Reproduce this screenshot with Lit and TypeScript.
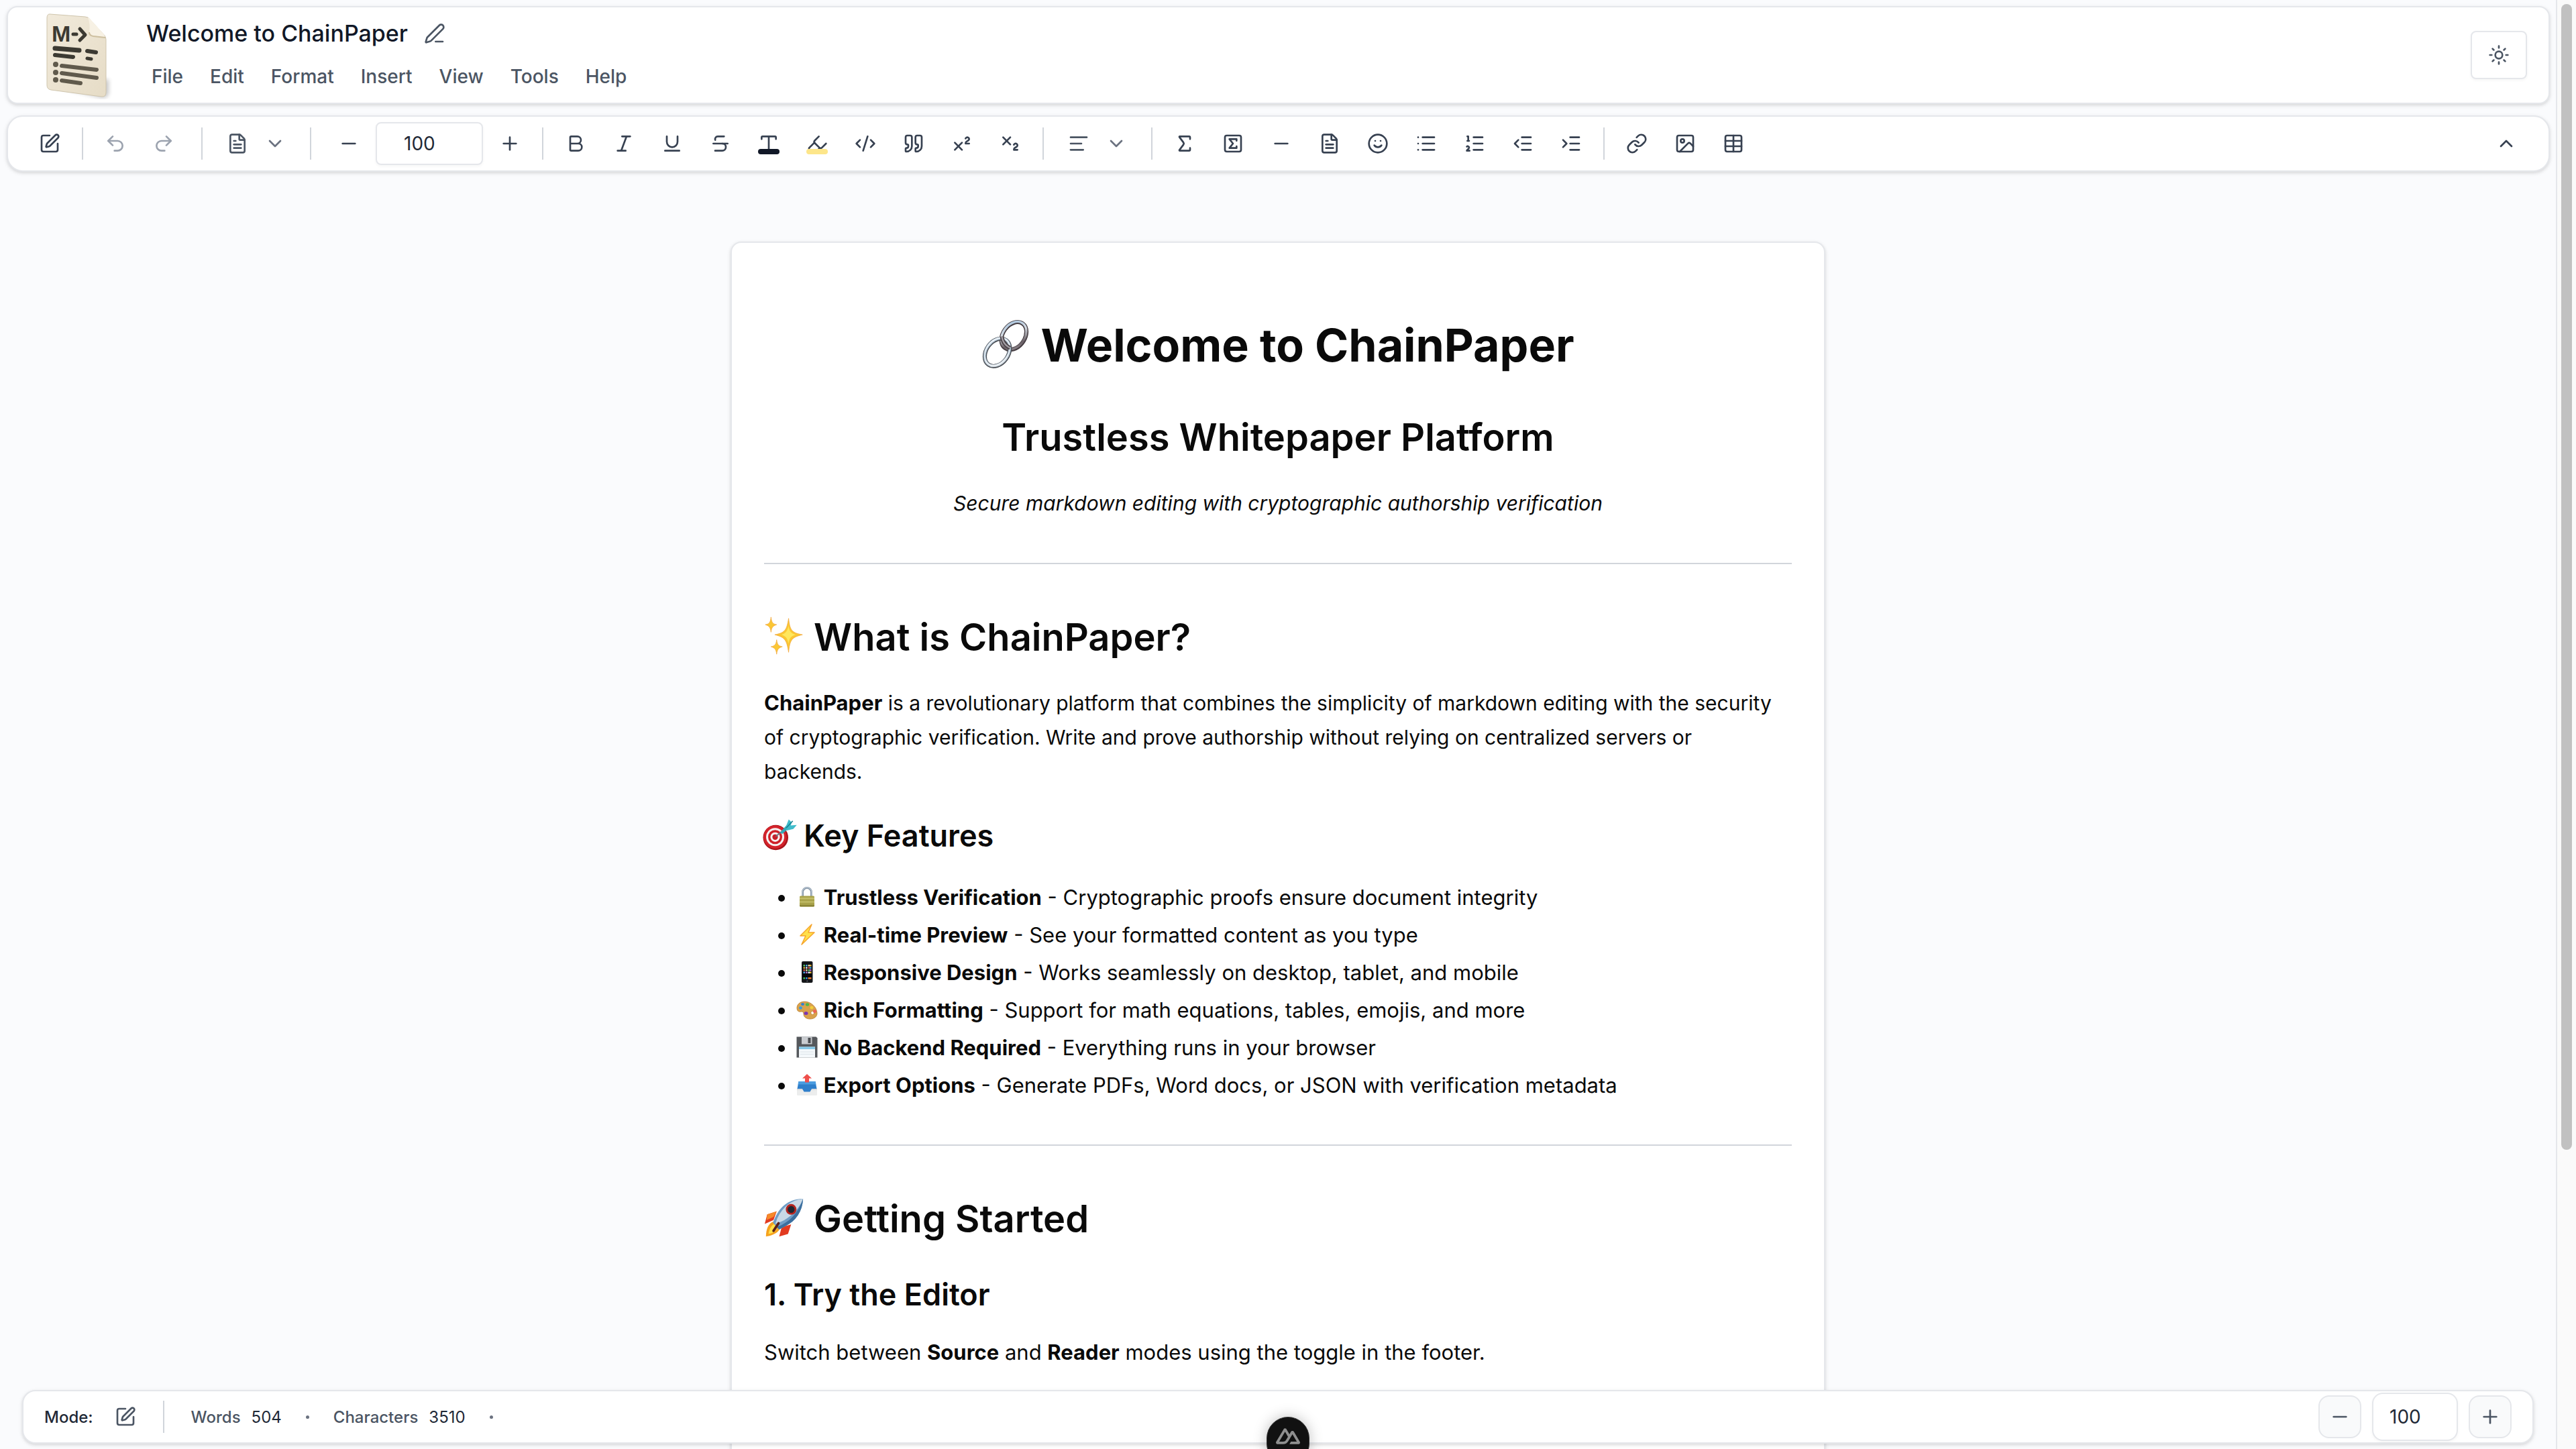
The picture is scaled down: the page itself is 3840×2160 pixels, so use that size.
import { LitElement, html, svg, css } from "lit";
import { customElement, property } from "lit/decorators.js";

const ICONS: Record<string, unknown> = {
  squarePen: svg`<path d="M12 3H5a2 2 0 0 0-2 2v14a2 2 0 0 0 2 2h14a2 2 0 0 0 2-2v-7"/><path d="M18.375 2.625a1 1 0 0 1 3 3l-9.013 9.014a2 2 0 0 1-.853.505l-2.873.84a.5.5 0 0 1-.62-.62l.84-2.873a2 2 0 0 1 .506-.852z"/>`,
  penLine: svg`<path d="M13 21h8"/><path d="M21.174 6.812a1 1 0 0 0-3.986-3.987L3.842 16.174a2 2 0 0 0-.5.83l-1.321 4.352a.5.5 0 0 0 .623.622l4.353-1.32a2 2 0 0 0 .83-.497z"/>`,
  undo: svg`<path d="M9 14 4 9l5-5"/><path d="M4 9h10.5a5.5 5.5 0 0 1 0 11H11"/>`,
  redo: svg`<path d="m15 14 5-5-5-5"/><path d="M20 9H9.500a5.5 5.5 0 0 0 0 11H13"/>`,
  fileText: svg`<path d="M6 22a2 2 0 0 1-2-2V4a2 2 0 0 1 2-2h8a2.400 2.400 0 0 1 1.704.706l3.588 3.588A2.400 2.400 0 0 1 20 8v12a2 2 0 0 1-2 2z"/><path d="M14 2v5a1 1 0 0 0 1 1h5"/><path d="M10 9H8"/><path d="M16 13H8"/><path d="M16 17H8"/>`,
  chevronDown: svg`<path d="m6 9 6 6 6-6"/>`,
  chevronUp: svg`<path d="m18 15-6-6-6 6"/>`,
  minus: svg`<path d="M5 12h14"/>`,
  plus: svg`<path d="M5 12h14"/><path d="M12 5v14"/>`,
  bold: svg`<path d="M6 12h9a4 4 0 0 1 0 8H7a1 1 0 0 1-1-1V5a1 1 0 0 1 1-1h7a4 4 0 0 1 0 8"/>`,
  italic: svg`<path d="M19 4h-9"/><path d="M14 20H5"/><path d="M15 4 9 20"/>`,
  underline: svg`<path d="M6 4v6a6 6 0 0 0 12 0V4"/><path d="M4 20h16"/>`,
  strike: svg`<path d="M16 4H9a3 3 0 0 0-2.830 4"/><path d="M14 12a4 4 0 0 1 0 8H6"/><path d="M4 12h16"/>`,
  type: svg`<path d="M12 4v16"/><path d="M4 7V5a1 1 0 0 1 1-1h14a1 1 0 0 1 1 1v2"/><path d="M9 20h6"/>`,
  highlighter: svg`<path d="m9 11-6 6v3h9l3-3"/><path d="m22 12-4.600 4.600a2 2 0 0 1-2.800 0l-5.200-5.200a2 2 0 0 1 0-2.800L14 4"/>`,
  code: svg`<path d="m18 16 4-4-4-4"/><path d="m6 8-4 4 4 4"/><path d="m14.500 4-5 16"/>`,
  quote: svg`<path d="M16 3a2 2 0 0 0-2 2v6a2 2 0 0 0 2 2 1 1 0 0 1 1 1v1a2 2 0 0 1-2 2 1 1 0 0 0-1 1v2a1 1 0 0 0 1 1 6 6 0 0 0 6-6V5a2 2 0 0 0-2-2z"/><path d="M5 3a2 2 0 0 0-2 2v6a2 2 0 0 0 2 2 1 1 0 0 1 1 1v1a2 2 0 0 1-2 2 1 1 0 0 0-1 1v2a1 1 0 0 0 1 1 6 6 0 0 0 6-6V5a2 2 0 0 0-2-2z"/>`,
  superscript: svg`<path d="m4 19 8-8"/><path d="m12 19-8-8"/><path d="M20 12h-4c0-1.500.442-2 1.500-2.500S20 8.334 20 7.002c0-.472-.170-.930-.484-1.290a2.105 2.105 0 0 0-2.617-.436c-.420.239-.738.614-.899 1.060"/>`,
  subscript: svg`<path d="m4 5 8 8"/><path d="m12 5-8 8"/><path d="M20 19h-4c0-1.500.440-2 1.500-2.500S20 15.330 20 14c0-.470-.170-.930-.480-1.290a2.110 2.110 0 0 0-2.620-.440c-.420.240-.740.620-.900 1.070"/>`,
  alignLeft: svg`<path d="M21 5H3"/><path d="M15 12H3"/><path d="M17 19H3"/>`,
  sigma: svg`<path d="M18 7V5a1 1 0 0 0-1-1H6.500a.5.5 0 0 0-.4.8l4.500 6a2 2 0 0 1 0 2.400l-4.500 6a.5.5 0 0 0 .4.8H17a1 1 0 0 0 1-1v-2"/>`,
  squareSigma: svg`<rect width="18" height="18" x="3" y="3" rx="2"/><path d="M16 8.900V7H8l4 5-4 5h8v-1.900"/>`,
  smile: svg`<circle cx="12" cy="12" r="10"/><path d="M8 14s1.500 2 4 2 4-2 4-2"/><path d="M9 9h.01"/><path d="M15 9h.01"/>`,
  list: svg`<path d="M3 5h.01"/><path d="M3 12h.01"/><path d="M3 19h.01"/><path d="M8 5h13"/><path d="M8 12h13"/><path d="M8 19h13"/>`,
  listOrdered: svg`<path d="M11 5h10"/><path d="M11 12h10"/><path d="M11 19h10"/><path d="M4 4h1v5"/><path d="M4 9h2"/><path d="M6.500 20H3.400c0-1 2.600-1.925 2.600-3.500a1.500 1.500 0 0 0-2.600-1.020"/>`,
  outdent: svg`<path d="M21 5H11"/><path d="M21 12H11"/><path d="M21 19H11"/><path d="m7 8-4 4 4 4"/>`,
  indent: svg`<path d="M21 5H11"/><path d="M21 12H11"/><path d="M21 19H11"/><path d="m3 8 4 4-4 4"/>`,
  link: svg`<path d="M10 13a5 5 0 0 0 7.540.540l3-3a5 5 0 0 0-7.070-7.070l-1.720 1.710"/><path d="M14 11a5 5 0 0 0-7.540-.540l-3 3a5 5 0 0 0 7.070 7.070l1.710-1.710"/>`,
  image: svg`<rect width="18" height="18" x="3" y="3" rx="2"/><circle cx="9" cy="9" r="2"/><path d="m21 15-3.086-3.086a2 2 0 0 0-2.828 0L6 21"/>`,
  table: svg`<path d="M12 3v18"/><rect width="18" height="18" x="3" y="3" rx="2"/><path d="M3 9h18"/><path d="M3 15h18"/>`,
  sun: svg`<circle cx="12" cy="12" r="4"/><path d="M12 2v2"/><path d="M12 20v2"/><path d="m4.930 4.930 1.410 1.410"/><path d="m17.660 17.660 1.410 1.410"/><path d="M2 12h2"/><path d="M20 12h2"/><path d="m6.340 17.660-1.410 1.410"/><path d="m19.070 4.930-1.410 1.410"/>`,
};

const EMOJI: Record<string, unknown> = {
  link: svg`
    <defs>
      <linearGradient id="a" x1="0" y1="0" x2="1" y2="1"><stop offset="0" stop-color="#9fc0de"/><stop offset=".4" stop-color="#d5dbe2"/><stop offset=".75" stop-color="#6a6066"/><stop offset="1" stop-color="#a9a3a8"/></linearGradient>
      <linearGradient id="b" x1="0" y1="0" x2="1" y2="1"><stop offset="0" stop-color="#d8e6f2"/><stop offset=".5" stop-color="#9fb4c6"/><stop offset="1" stop-color="#e9eef2"/></linearGradient>
    </defs>
    <g fill="none">
      <g transform="rotate(36 43 21)"><ellipse cx="43" cy="21" rx="14.500" ry="20" stroke="#453d42" stroke-width="5.500"/><ellipse cx="42.600" cy="20.600" rx="14.500" ry="20" stroke="url(#a)" stroke-width="3"/></g>
      <g transform="rotate(36 21 43)"><ellipse cx="21" cy="43" rx="14.500" ry="20" stroke="#4b4f55" stroke-width="5.500"/><ellipse cx="20.600" cy="42.600" rx="14.500" ry="20" stroke="url(#b)" stroke-width="3.400"/><ellipse cx="20.400" cy="42.400" rx="14.500" ry="20" stroke="#fff" stroke-width="1"/></g>
      <path d="M27 22c1 7 5 12 11 15" stroke="#4a4247" stroke-width="5"/><path d="M27 22c1 7 5 12 11 15" stroke="#a49fa5" stroke-width="2"/>
    </g>`,
  sparkles: svg`
    <g fill="#fbc734" stroke="#f0a63c" stroke-width=".8">
      <path d="M39 4c2 19 5 23 22 26-17 4-20 8-22 28-3-20-6-24-22-28 16-3 19-7 22-26z"/>
      <path d="M11 2c1 9 3 11 9 12-6 2-8 4-9 12-1-8-3-10-9-12 6-1 8-3 9-12z"/>
      <path d="M20 38c1 8 3 10 9 11-6 2-8 4-9 12-1-8-3-10-9-12 6-1 8-3 9-11z"/>
    </g><path d="M39 16c1 9 4 12 11 14-7 2-10 5-11 14-2-9-5-12-11-14 6-2 9-5 11-14z" fill="#ffe75e"/>`,
  target: svg`
    <circle cx="23" cy="38" r="25" fill="#a8141b"/><circle cx="22" cy="37" r="23" fill="#d4232b"/><circle cx="22" cy="37" r="18" fill="#f6f2f2"/><circle cx="22" cy="37" r="14" fill="#cf2129"/><circle cx="22" cy="37" r="9.500" fill="#f6f2f2"/><circle cx="22" cy="37" r="5.500" fill="#c81d26"/>
    <path d="M23 36 46 17" stroke="#6b7480" stroke-width="2.500"/>
    <path d="M32 28 45 13l5 6-14 12z" fill="#35a9b8"/><path d="m43 17 6-15 6 6-2 6 12-1-7 8-13 3z" fill="#3fbccb"/><path d="m44 19 13-14" stroke="#17808f" stroke-width="2"/>`,
  lock: svg`
    <path d="M19 32V18a13 13 0 0 1 26 0v14" fill="none" stroke="#8797a8" stroke-width="6"/><path d="M18 32V18a14 14 0 0 1 28 0v14" fill="none" stroke="#c9d5e0" stroke-width="2"/>
    <rect x="10" y="29" width="44" height="32" rx="3" fill="#a8a24a"/><path d="M10 34h44v5H10zM10 45h44v4H10z" fill="#c2bd68"/><path d="M10 56h44v2a3 3 0 0 1-3 3H13a3 3 0 0 1-3-3z" fill="#8b8537"/>`,
  bolt: svg`<path d="M46 2 12 36h16L16 62l38-36H36z" fill="#ffe04a" stroke="#f6a52c" stroke-width="3" stroke-linejoin="round"/>`,
  phone: svg`
    <rect x="16" y="0" width="33" height="64" rx="4" fill="#15171a"/><rect x="19" y="8" width="27" height="47" fill="#05070a"/>
    <g><path d="M21 10h5v5h-5zM35 24h5v5h-5z" fill="#58c66a"/><path d="M28 10h5v5h-5zM21 31h5v5h-5zM40 17h5v5h-5z" fill="#4fa5e8"/><path d="M35 10h5v5h-5zM28 24h5v5h-5z" fill="#e8d9a0"/><path d="M40 10h5v5h-5zM21 17h5v5h-5zM40 31h5v5h-5z" fill="#e2b23f"/><path d="M28 17h5v5h-5zM35 31h5v5h-5z" fill="#d9eaf5"/><path d="M35 17h5v5h-5zM21 24h5v5h-5z" fill="#d8574e"/><path d="M40 24h5v5h-5zM28 31h5v5h-5z" fill="#b06fd0"/><path d="M21 48h5v5h-5z" fill="#46c552"/><path d="M28 48h5v5h-5z" fill="#3b8de8"/><path d="M35 48h5v5h-5zM40 48h5v5h-5z" fill="#ef7f34"/></g><circle cx="32.500" cy="59" r="2.200" fill="#596069"/>`,
  palette: svg`
    <path d="M25 8C10 8 1 17 2 29c1 9 7 10 12 9 6-1 8 2 8 8 0 8 8 14 19 14 13 0 22-8 21-18C61 24 43 8 25 8zm20 30a5 5 0 1 1 1 8 5 5 0 0 1-1-8z" fill="#d9a24c" stroke="#b57b2c" stroke-width="1.500"/>
    <ellipse cx="13" cy="27" rx="5" ry="4.500" fill="#3a9be0"/><ellipse cx="19" cy="16" rx="5" ry="4" fill="#2f7fd6"/><ellipse cx="33" cy="17" rx="5.500" ry="4.500" fill="#4fb64a"/><ellipse cx="46" cy="26" rx="5" ry="4.500" fill="#f2cf3a"/><ellipse cx="55" cy="37" rx="5" ry="5" fill="#ee6457"/><ellipse cx="29" cy="43" rx="6" ry="5" fill="#7a35b4"/>`,
  floppy: svg`
    <path d="M1 1h58l4 4v58H1z" fill="#55585c"/><path d="M16 1h31v22H16z" fill="#c9ccd0"/><path d="M35 4h8v16h-8z" fill="#4a4d51"/><path d="M8 31h48v32H8z" fill="#f4f8fb"/><path d="M8 31h48v7H8z" fill="#86c8e8"/><path d="M12 46h40M12 53h40" stroke="#d6dde3" stroke-width="1.500"/>`,
  outbox: svg`
    <path d="M9 31h46l7 14v16a2 2 0 0 1-2 2H4a2 2 0 0 1-2-2V45z" fill="#d9dcde"/><path d="M2 48h60v13a2 2 0 0 1-2 2H4a2 2 0 0 1-2-2z" fill="#eceded"/>
    <path d="M7 22h50l4 22H46l-5 9H23l-5-9H3z" fill="#2f7fcb"/><path d="M7 22h50l2 9H5z" fill="#4c9de0"/>
    <path d="m32 0 14 13h-8v12H26V13h-8z" fill="#ef4f4b"/>`,
  rocket: svg`
    <path d="M20 22 5 27 1 42l14-6zM43 43l-5 15-14 4 4-15z" fill="#e23a20"/><path d="M5 27l15-5-5 9-11 5z" fill="#f58a2a"/>
    <path d="M15 38C7 41 3 50 3 62c7-1 18-4 22-12z" fill="#f6a21e"/><path d="M16 42c-5 3-8 9-9 16 6-1 11-4 14-9z" fill="#ffe14b"/>
    <path d="M62 2C42 2 27 12 18 31l-4 9 10 11 9-5C51 37 61 22 62 2z" fill="#6f9dc6"/><path d="M62 2C44 4 30 14 21 33l-3 9 8-3C42 32 56 18 62 2z" fill="#c9d9e6"/><path d="M62 2c-1 20-11 35-29 44l-9 5-4-4c20-7 34-22 42-45z" fill="#3c6f9e"/>
    <circle cx="43" cy="19" r="8.500" fill="#b3241f"/><circle cx="43" cy="19" r="5.500" fill="#1f2630"/><path d="M23 41 15 53" stroke="#5a1f1a" stroke-width="4" stroke-linecap="round"/>`,
};

@customElement("ui-icon")
export class UiIcon extends LitElement {
  @property() name = "";

  static styles = css`
    :host {
      display: block;
      width: 32px;
      height: 32px;
      flex: none;
    }
    .icon {
      display: block;
      width: 100%;
      height: 100%;
      fill: none;
      stroke: currentColor;
      stroke-width: 2;
      stroke-linecap: round;
      stroke-linejoin: round;
    }
  `;

  render() {
    return html`<svg class="icon" viewBox="0 0 24 24" aria-hidden="true">${ICONS[this.name]}</svg>`;
  }
}

@customElement("ui-emoji")
export class UiEmoji extends LitElement {
  @property() name = "";

  static styles = css`
    :host {
      display: inline-block;
      width: var(--emoji-size, 32px);
      height: var(--emoji-size, 32px);
      vertical-align: -0.14em;
    }
    .emoji {
      display: block;
      width: 100%;
      height: 100%;
      overflow: visible;
    }
  `;

  render() {
    return html`<svg class="emoji" viewBox="0 0 64 64" role="img" aria-label=${this.name}>${EMOJI[this.name]}</svg>`;
  }
}

type Tool = { icon: string; label: string; bar?: string };

const MENUS = ["File", "Edit", "Format", "Insert", "View", "Tools", "Help"];

const TEXT_TOOLS: Tool[] = [
  { icon: "bold", label: "Bold" },
  { icon: "italic", label: "Italic" },
  { icon: "underline", label: "Underline" },
  { icon: "strike", label: "Strikethrough" },
  { icon: "type", label: "Text color", bar: "ink" },
  { icon: "highlighter", label: "Highlight color", bar: "marker" },
  { icon: "code", label: "Code" },
  { icon: "quote", label: "Quote" },
  { icon: "superscript", label: "Superscript" },
  { icon: "subscript", label: "Subscript" },
];

const BLOCK_TOOLS: Tool[] = [
  { icon: "sigma", label: "Inline math" },
  { icon: "squareSigma", label: "Math block" },
  { icon: "minus", label: "Horizontal rule" },
  { icon: "fileText", label: "Page break" },
  { icon: "smile", label: "Emoji" },
  { icon: "list", label: "Bulleted list" },
  { icon: "listOrdered", label: "Numbered list" },
  { icon: "outdent", label: "Decrease indent" },
  { icon: "indent", label: "Increase indent" },
];

const INSERT_TOOLS: Tool[] = [
  { icon: "link", label: "Link" },
  { icon: "image", label: "Image" },
  { icon: "table", label: "Table" },
];

const FEATURES = [
  { emoji: "lock", name: "Trustless Verification", text: "Cryptographic proofs ensure document integrity" },
  { emoji: "bolt", name: "Real-time Preview", text: "See your formatted content as you type" },
  { emoji: "phone", name: "Responsive Design", text: "Works seamlessly on desktop, tablet, and mobile" },
  { emoji: "palette", name: "Rich Formatting", text: "Support for math equations, tables, emojis, and more" },
  { emoji: "floppy", name: "No Backend Required", text: "Everything runs in your browser" },
  { emoji: "outbox", name: "Export Options", text: "Generate PDFs, Word docs, or JSON with verification metadata" },
];

@customElement("app-root")
export class AppRoot extends LitElement {
  static styles = css`
    :host {
      display: block;
      font-family: Inter, "Liberation Sans", sans-serif;
      color: #0a0a0a;
    }
    * {
      box-sizing: border-box;
    }
    button,
    input {
      font: inherit;
      color: inherit;
      margin: 0;
    }
    button {
      border: 0;
      padding: 0;
      background: none;
      display: flex;
      align-items: center;
      justify-content: center;
      cursor: pointer;
    }
    .shell {
      position: relative;
      display: flex;
      height: 100vh;
      overflow: hidden;
      background: #fafbfd;
    }
    .workspace {
      position: relative;
      flex: 1;
      min-width: 0;
      display: flex;
      flex-direction: column;
    }
    .panel {
      background: #fff;
      border: 2px solid #e5e7eb;
      box-shadow: 0 2px 6px rgba(0, 0, 0, 0.1), 0 2px 4px rgba(0, 0, 0, 0.06);
    }
    .header {
      display: flex;
      align-items: center;
      gap: 42px;
      margin: 9px 9px 0 10px;
      padding: 5px 32px 5px 48px;
      border-radius: 16px;
    }
    .logo {
      display: block;
      width: 108px;
      height: 132px;
    }
    .logo-letter {
      font: 700 34px "Liberation Sans", sans-serif;
      fill: #3c3a32;
    }
    .heading {
      flex: 1;
      display: flex;
      flex-direction: column;
      gap: 16px;
    }
    .title-row {
      display: flex;
      align-items: center;
      gap: 24px;
      height: 48px;
      padding-left: 8px;
    }
    .title {
      margin: 0;
      font-size: 34px;
      line-height: 48px;
      font-weight: 500;
      color: #111827;
    }
    .rename,
    .theme {
      color: #4b5563;
    }
    .menus {
      display: flex;
      gap: 8px;
    }
    .menu {
      height: 48px;
      padding: 0 16px;
      font-size: 28px;
      font-weight: 500;
      color: #4b5563;
    }
    .theme {
      width: 84px;
      height: 72px;
      border: 2px solid #e5e7eb;
      border-radius: 8px;
      background: #fff;
      box-shadow: 0 2px 4px rgba(0, 0, 0, 0.04);
    }
    .toolbar {
      display: flex;
      align-items: center;
      gap: 8px;
      margin: 17px 9px 0 10px;
      padding: 8px 31px 8px 30px;
      border-radius: 24px;
      color: #374151;
    }
    .group {
      display: flex;
      align-items: center;
      gap: 8px;
    }
    .history {
      margin-right: 8px;
    }
    .zoom {
      margin-left: 8px;
    }
    .tool {
      width: 64px;
      height: 64px;
      border-radius: 12px;
    }
    .tool:disabled {
      color: #9ca3af;
    }
    .swatched {
      position: relative;
    }
    .swatch {
      position: absolute;
      left: 16px;
      bottom: 16px;
      width: 32px;
      height: 8px;
      border-radius: 4px;
    }
    .ink {
      background: #111827;
    }
    .marker {
      background: #fde68a;
    }
    .picker {
      height: 64px;
      gap: 24px;
      padding: 0 12px;
      margin: 0 8px;
      color: #4b5563;
    }
    .caret {
      color: #6b7280;
    }
    .divider {
      width: 2px;
      height: 48px;
      margin: 0 8px;
      background: #d1d5db;
    }
    .amount {
      width: 160px;
      height: 64px;
      padding: 0 38px 0 40px;
      border: 2px solid #e5e7eb;
      border-radius: 8px;
      background: #fff;
      font-size: 28px;
      color: #1f2937;
      box-shadow: 0 2px 4px rgba(0, 0, 0, 0.04);
    }
    .collapse {
      margin-left: auto;
    }
    .scroller {
      flex: 1;
      min-height: 0;
      overflow: hidden;
      padding: 104px 48px 0;
    }
    .page {
      max-width: 1632px;
      margin: 0 auto;
      padding: 112px 48px 240px;
      border-radius: 16px;
      font-size: 31px;
      line-height: 51px;
    }
    .page-title,
    .section-title,
    .topic-title,
    .copy,
    .features {
      margin: 0;
    }
    .page-title {
      --emoji-size: 72px;
      font-size: 68px;
      line-height: 80px;
      font-weight: 700;
      text-align: center;
      margin-bottom: 62px;
    }
    .section-title {
      --emoji-size: 60px;
      font-size: 56px;
      line-height: 72px;
      font-weight: 600;
      margin-bottom: 37px;
    }
    .topic-title {
      --emoji-size: 48px;
      font-size: 45px;
      line-height: 56px;
      font-weight: 600;
      margin-top: 42px;
      margin-bottom: 32px;
    }
    .section-title + .topic-title {
      margin-top: 49px;
    }
    .centered {
      text-align: center;
    }
    .lead {
      font-size: 30px;
    }
    .strong {
      font-size: 31px;
      line-height: 1;
      font-weight: 700;
    }
    .rule {
      height: 2px;
      border: 0;
      margin: 63px 0 73px;
      background: #d1d5db;
    }
    .features {
      display: grid;
      gap: 5px;
      padding: 6px 0 0 48px;
    }
    .footer {
      position: absolute;
      left: 33px;
      right: 33px;
      bottom: 8px;
      display: flex;
      align-items: center;
      padding: 2px 31px;
      border-radius: 20px;
      font-size: 24px;
      font-weight: 500;
      color: #4b5563;
    }
    .mode {
      display: flex;
      align-items: center;
      gap: 16px;
      color: #1f2937;
    }
    .mode-toggle {
      color: #4b5563;
    }
    .footer-divider {
      margin: 0 40px 0 24px;
    }
    .stats {
      flex: 1;
      display: flex;
      align-items: center;
      gap: 36px;
    }
    .stat {
      display: flex;
      gap: 16px;
    }
    .value {
      color: #1f2937;
      font-weight: 400;
    }
    .dot {
      width: 5px;
      height: 5px;
      border-radius: 50%;
      background: #6b7280;
    }
    .footer-zoom {
      display: flex;
      align-items: center;
      gap: 16px;
    }
    .step {
      width: 64px;
      height: 64px;
      border: 2px solid #e5e7eb;
      border-radius: 16px;
      background: #f9fafb;
    }
    .footer-amount {
      width: 128px;
      height: 72px;
      padding: 0 24px;
      border-radius: 16px;
      font-weight: 400;
    }
    .rail {
      width: 30px;
      padding: 6px 6px 0;
      border-left: 2px solid #e5e7eb;
      background: #fafafa;
    }
    .thumb {
      width: 16px;
      height: calc(79% + 6px);
      border-radius: 8px;
      background: #c1c1c1;
    }
    .devtools {
      position: absolute;
      left: 50%;
      bottom: -24px;
      width: 64px;
      height: 72px;
      margin-left: -32px;
      padding-top: 10px;
      align-items: flex-start;
      border: 1px solid #333;
      border-radius: 32px;
      background: #111;
      color: #8f8f8f;
      box-shadow: 0 0 20px rgba(0, 0, 0, 0.25);
    }
    .devtools-mark {
      width: 36px;
      height: 36px;
      fill: currentColor;
    }
  `;

  private tool = (t: Tool) => html`
    <button class="tool ${t.bar ? "swatched" : ""}" aria-label=${t.label}>
      <ui-icon name=${t.icon}></ui-icon>
      ${t.bar ? html`<span class="swatch ${t.bar}"></span>` : null}
    </button>
  `;

  private logo() {
    return html`
      <svg class="logo" viewBox="60 16 108 132" role="img" aria-label="ChainPaper">
        <defs>
          <linearGradient id="paper" x1="0" y1="0" x2="1" y2="1">
            <stop offset="0" stop-color="#f1eadb" />
            <stop offset="1" stop-color="#e6dcc6" />
          </linearGradient>
          <filter id="soft" x="-20%" y="-20%" width="140%" height="140%"><feGaussianBlur stdDeviation="3" /></filter>
        </defs>
        <path d="M78 128 152 146q10 0 10-8V118z" fill="#000" opacity=".22" filter="url(#soft)" />
        <path d="M74 21 127 25q5 0 8 5l21 23q2 3 2 6v79q0 7-7 6L76 134q-6-1-6-7V27q0-6 4-6z" fill="url(#paper)" stroke="#cfc5ad" stroke-width="1" />
        <path d="M131 26q4 10 2 22 0 5 6 5l18 3q-1-4-4-7l-17-19q-2-3-5-4z" fill="#f7f1e4" />
        <path d="M133 48q0 5 6 6l18 2" fill="none" stroke="#cdbf9f" stroke-width="2" />
        <text class="logo-letter" x="77" y="62">M</text>
        <g fill="none" stroke="#3c3a32" stroke-linecap="round" stroke-linejoin="round">
          <path d="M109 51h5" stroke-width="5" />
          <path d="m119 43 8 9-8 8" stroke-width="5" />
          <path d="m82 72 36 3" stroke-width="7" />
          <path d="m130 76 13 2" stroke-width="6" />
          <path d="m82 82 27 3" stroke-width="6" />
          <path d="m130 87 6 1" stroke-width="5" />
        </g>
        <g fill="none" stroke="#605a4c" stroke-width="6" stroke-linecap="round">
          <path d="m92 98 52 6M92 109l52 7M92 120l28 4" />
        </g>
        <g fill="#605a4c"><circle cx="83" cy="96" r="4" /><circle cx="83" cy="108" r="4" /><circle cx="83" cy="119" r="4" /></g>
      </svg>
    `;
  }

  render() {
    return html`
      <div class="shell">
        <div class="workspace">
          <header class="header panel">
            ${this.logo()}
            <div class="heading">
              <div class="title-row">
                <h1 class="title">Welcome to ChainPaper</h1>
                <button class="rename" aria-label="Rename document"><ui-icon name="penLine"></ui-icon></button>
              </div>
              <nav class="menus" aria-label="Main menu">
                ${MENUS.map((m) => html`<button class="menu">${m}</button>`)}
              </nav>
            </div>
            <button class="theme" aria-label="Toggle theme"><ui-icon name="sun"></ui-icon></button>
          </header>

          <div class="toolbar panel" role="toolbar" aria-label="Formatting">
            ${this.tool({ icon: "squarePen", label: "Edit mode" })}
            <span class="divider"></span>
            <div class="group history">
              <button class="tool" disabled aria-label="Undo"><ui-icon name="undo"></ui-icon></button>
              <button class="tool" disabled aria-label="Redo"><ui-icon name="redo"></ui-icon></button>
            </div>
            <span class="divider"></span>
            <button class="picker" aria-label="Template">
              <ui-icon name="fileText"></ui-icon><ui-icon class="caret" name="chevronDown"></ui-icon>
            </button>
            <span class="divider"></span>
            <div class="group zoom">
              ${this.tool({ icon: "minus", label: "Decrease size" })}
              <input class="amount" type="text" inputmode="numeric" aria-label="Size" .value=${"100"} />
              ${this.tool({ icon: "plus", label: "Increase size" })}
            </div>
            <span class="divider"></span>
            ${TEXT_TOOLS.map(this.tool)}
            <span class="divider"></span>
            <button class="picker" aria-label="Alignment">
              <ui-icon name="alignLeft"></ui-icon><ui-icon class="caret" name="chevronDown"></ui-icon>
            </button>
            <span class="divider"></span>
            ${BLOCK_TOOLS.map(this.tool)}
            <span class="divider"></span>
            ${INSERT_TOOLS.map(this.tool)}
            <button class="tool collapse" aria-label="Collapse toolbar"><ui-icon name="chevronUp"></ui-icon></button>
          </div>

          <main class="scroller">
            <article class="page panel">
              <h1 class="page-title"><ui-emoji name="link"></ui-emoji> Welcome to ChainPaper</h1>
              <h2 class="section-title centered">Trustless Whitepaper Platform</h2>
              <p class="copy lead centered"><em>Secure markdown editing with cryptographic authorship verification</em></p>
              <hr class="rule" />
              <h2 class="section-title"><ui-emoji name="sparkles"></ui-emoji> What is ChainPaper?</h2>
              <p class="copy lead">
                <strong class="strong">ChainPaper</strong> is a revolutionary platform that combines the simplicity of
                markdown editing with the security of cryptographic verification. Write and prove authorship without
                relying on centralized servers or backends.
              </p>
              <h3 class="topic-title"><ui-emoji name="target"></ui-emoji> Key Features</h3>
              <ul class="features">
                ${FEATURES.map(
                  (f) =>
                    html`<li><ui-emoji name=${f.emoji}></ui-emoji> <strong class="strong">${f.name}</strong> - ${f.text}</li>`
                )}
              </ul>
              <hr class="rule" />
              <h2 class="section-title"><ui-emoji name="rocket"></ui-emoji> Getting Started</h2>
              <h3 class="topic-title">1. Try the Editor</h3>
              <p class="copy">
                Switch between <strong class="strong">Source</strong> and <strong class="strong">Reader</strong> modes
                using the toggle in the footer.
              </p>
            </article>
          </main>

          <footer class="footer panel">
            <div class="mode">
              <span>Mode:</span>
              <button class="tool mode-toggle" aria-label="Switch mode"><ui-icon name="squarePen"></ui-icon></button>
            </div>
            <span class="divider footer-divider"></span>
            <div class="stats">
              <span class="stat"><span>Words</span><span class="value">504</span></span>
              <span class="dot"></span>
              <span class="stat"><span>Characters</span><span class="value">3510</span></span>
              <span class="dot"></span>
            </div>
            <div class="footer-zoom">
              <button class="step" aria-label="Zoom out"><ui-icon name="minus"></ui-icon></button>
              <input class="amount footer-amount" type="text" inputmode="numeric" aria-label="Zoom" .value=${"100"} />
              <button class="step" aria-label="Zoom in"><ui-icon name="plus"></ui-icon></button>
            </div>
          </footer>
        </div>
        <div class="rail"><div class="thumb"></div></div>
        <button class="devtools" aria-label="Toggle devtools">
          <svg class="devtools-mark" viewBox="0 0 24 24" aria-hidden="true">
            <path d="M13.4642 19.8295h8.9218c.2834 0 .5618-.0723.8072-.2098a1.5899 1.5899 0 0 0 .5908-.5732 1.5293 1.5293 0 0 0 .216-.783 1.529 1.529 0 0 0-.2167-.7828L17.7916 7.4142a1.59 1.59 0 0 0-.5907-.573 1.6524 1.6524 0 0 0-.807-.2099c-.2833 0-.5616.0724-.807.2098a1.59 1.59 0 0 0-.5907.5731L13.4642 9.99l-2.9954-5.0366a1.5913 1.5913 0 0 0-.591-.573 1.6533 1.6533 0 0 0-.8071-.2098c-.2834 0-.5617.0723-.8072.2097a1.5913 1.5913 0 0 0-.591.573L.2168 17.4808A1.5292 1.5292 0 0 0 0 18.2635c-.0001.2749.0744.545.216.783a1.59 1.59 0 0 0 .5908.5732c.2454.1375.5238.2098.8072.2098h5.6003c2.219 0 3.8554-.9454 4.9813-2.7899l2.7337-4.5922L16.3935 9.99l4.3944 7.382h-5.8586zm-6.341-2.4601-3.9083-.0009 5.8586-9.8421 2.9232 4.921-1.9572 3.2892c-.7478 1.1967-1.5972 1.6328-2.9163 1.6328z" />
          </svg>
        </button>
      </div>
    `;
  }
}
